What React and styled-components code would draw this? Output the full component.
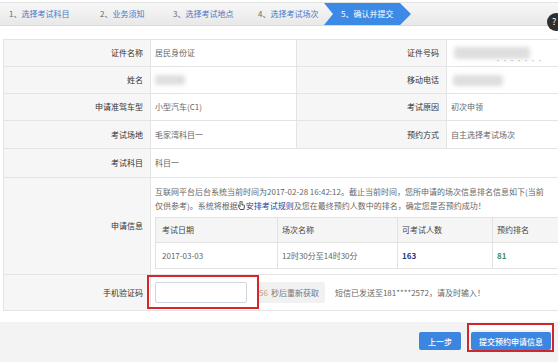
import React from "react";
import styled, { createGlobalStyle } from "styled-components";

const Global = createGlobalStyle`
  html, body { margin: 0; padding: 0; background: #fff; overflow: hidden; }
  body { font-family: "Noto Sans CJK SC", "Noto Sans", sans-serif; font-size: 8px; color: #555; }
`;

const Page = styled.div`
  position: relative;
  width: 558px;
  height: 362px;
  overflow: hidden;
  background: #fff;
`;

const StepBar = styled.div`
  margin-top: 2px;
  height: 22px;
  display: flex;
  align-items: stretch;
  background: linear-gradient(#f7f7f7, #e8e8e8);
  border-top: 1px solid #e2e2e2;
  border-bottom: 1px solid #dadada;
`;

const Step = styled.div`
  flex: 0 0 ${(p) => p.w}px;
  display: flex;
  align-items: center;
  padding-left: ${(p) => p.pl || 9}px;
  box-sizing: border-box;
  white-space: nowrap;
  color: #4a78c6;
  line-height: 10px;
`;

const StepNum = styled.span`
  color: #6a6a5a;
`;

const ActiveStep = styled(Step)`
  background: #3c89e6;
  color: #fff;
  clip-path: polygon(0 0, calc(100% - 11px) 0, 100% 50%, calc(100% - 11px) 100%, 0 100%, 9px 50%);
`;

const HelpDot = styled.div`
  position: absolute;
  left: 547px;
  top: 13px;
  width: 18px;
  height: 18px;
  border-radius: 50%;
  background: #2e2e2e;
  color: #fff;
  font-size: 9px;
  line-height: 18px;
  text-indent: 5px;
`;

const InfoGrid = styled.div`
  margin: 13px 0 0 3px;
  width: 640px;
  display: grid;
  grid-template-columns: 147px 146px 150px 197px;
  grid-template-rows: 27px 27px 27px 28px 29px 97px 36px;
  border-top: 1px solid #e4e4e4;
  border-left: 1px solid #e4e4e4;
`;

const Cell = styled.div`
  box-sizing: border-box;
  border-right: 1px solid #e4e4e4;
  border-bottom: 1px solid #e4e4e4;
  display: flex;
  align-items: center;
  white-space: nowrap;
  line-height: 12px;
  grid-column: span ${(p) => p.span || 1};
`;

const Label = styled(Cell)`
  justify-content: flex-end;
  padding-right: 7px;
  background: #f6f6f6;
  color: #333;
`;

const Value = styled(Cell)`
  padding-left: 4px;
  color: #666;
  position: relative;
`;

const InfoValue = styled(Value)`
  flex-direction: column;
  align-items: flex-start;
  padding-top: 7px;
`;

const Blur = styled.span`
  display: inline-block;
  width: ${(p) => p.w}px;
  height: ${(p) => p.h || 11}px;
  margin-left: ${(p) => p.ml || 0}px;
  background: #dedede;
  border-radius: 3px;
  filter: blur(2px);
`;

const Dots = styled.span`
  position: absolute;
  left: 48px;
  top: 15px;
  font-size: 6px;
  letter-spacing: 1px;
  color: #b5b5b5;
`;

const Para = styled.div`
  line-height: 14px;
  color: #666;
  white-space: nowrap;
`;

const Link = styled.span`
  color: #25409a;
`;

const Pointer = styled.svg`
  width: 7px;
  height: 9px;
  vertical-align: -1px;
  margin-right: 1px;
`;

const SubTable = styled.div`
  margin-top: 4px;
  display: grid;
  grid-template-columns: 122px 120px 95px 160px;
  grid-template-rows: 25px 26px;
  border-top: 1px solid #e2e2e2;
  border-left: 1px solid #e2e2e2;
`;

const SubCell = styled.div`
  box-sizing: border-box;
  border-right: 1px solid #e2e2e2;
  border-bottom: 1px solid #e2e2e2;
  display: flex;
  align-items: center;
  padding-left: ${(p) => (p.first ? 6 : 4)}px;
  background: ${(p) => (p.head ? "#f5f5f5" : "#fff")};
  color: ${(p) => p.color || (p.head ? "#444" : "#666")};
  font-weight: ${(p) => (p.bold ? 700 : 400)};
`;

const CodeWrap = styled.div`
  position: relative;
  display: flex;
  align-items: center;
`;

const CodeInput = styled.input`
  box-sizing: border-box;
  width: 92px;
  height: 21px;
  border: 1px solid #cfd6de;
  border-radius: 2px;
  background: #fff;
  outline: none;
  padding: 0 4px;
  font-size: 8px;
`;

const RedFrame = styled.div`
  position: absolute;
  left: -8px;
  top: -7px;
  right: -12px;
  bottom: -6px;
  border: 2px solid #d6262c;
  pointer-events: none;
`;

const CountBtn = styled.span`
  margin-left: 10px;
  height: 21px;
  display: flex;
  align-items: center;
  padding: 0 6px 0 2px;
  background: #f1f1f1;
  color: #777;
  border-radius: 2px;
`;

const Sec = styled.span`
  color: #c9a070;
  margin-right: 3px;
`;

const SmsNote = styled.span`
  margin-left: 10px;
  color: #666;
`;

const Footer = styled.div`
  margin-top: 11px;
  height: 40px;
  background: #f3f3f3;
  display: flex;
  justify-content: flex-end;
  align-items: flex-start;
  gap: 10px;
  padding: 10px 7px 0 0;
  box-sizing: border-box;
`;

const BlueBtn = styled.div`
  height: 18px;
  padding: 0 ${(p) => p.px}px;
  background: #3c86e0;
  color: #fff;
  display: flex;
  align-items: center;
  border-radius: 2px;
  white-space: nowrap;
  font-weight: 500;
`;

const SubmitWrap = styled.div`
  position: relative;
`;

const SubmitFrame = styled.div`
  position: absolute;
  left: -4px;
  top: -9px;
  right: -3px;
  bottom: -2px;
  border: 2px solid #d0272d;
  background: linear-gradient(#fff 0 5px, transparent 5px);
  z-index: 0;
`;

const SubmitBtn = styled(BlueBtn)`
  position: relative;
  z-index: 1;
`;

export default function App() {
  return (
    <Page>
      <Global />
      <StepBar>
        <Step w={91}><StepNum>1、</StepNum>选择考试科目</Step>
        <Step w={73}><StepNum>2、</StepNum>业务须知</Step>
        <Step w={85}><StepNum>3、</StepNum>选择考试地点</Step>
        <Step w={75}><StepNum>4、</StepNum>选择考试场次</Step>
        <ActiveStep w={87} pl={17}>5、确认并提交</ActiveStep>
      </StepBar>
      <HelpDot>?</HelpDot>

      <InfoGrid>
        <Label>证件名称</Label>
        <Value>居民身份证</Value>
        <Label>证件号码</Label>
        <Value>
          <Blur w={76} h={12} ml={3} />
          <Dots>·······</Dots>
        </Value>

        <Label>姓名</Label>
        <Value><Blur w={30} h={10} /></Value>
        <Label>移动电话</Label>
        <Value><Blur w={50} h={11} ml={2} /></Value>

        <Label>申请准驾车型</Label>
        <Value>小型汽车(C1)</Value>
        <Label>考试原因</Label>
        <Value>初次申领</Value>

        <Label>考试场地</Label>
        <Value>毛家湾科目一</Value>
        <Label>预约方式</Label>
        <Value>自主选择考试场次</Value>

        <Label>考试科目</Label>
        <Value span={3}>科目一</Value>

        <Label>申请信息</Label>
        <InfoValue span={3}>
          <Para>
            互联网平台后台系统当前时间为2017-02-28 16:42:12。截止当前时间，您所申请的场次信息排名信息如下(当前
            <br />
            仅供参考)。系统将根据
            <Pointer viewBox="0 0 7 9">
              <path d="M2 0.5v5l-1.2-1.2c-.5-.5-1.2 0-.8.6L2.2 8.5h3.6L6.5 5c.1-.6-.3-1-.8-1H4V0.5C4 0 3.6-.2 3 0S2 .2 2 .5z" fill="#fff" stroke="#222" strokeWidth="0.8" />
            </Pointer>
            <Link>安排考试规则</Link>及您在最终预约人数中的排名，确定您是否预约成功！
          </Para>
          <SubTable>
            <SubCell head first>考试日期</SubCell>
            <SubCell head>场次名称</SubCell>
            <SubCell head>可考试人数</SubCell>
            <SubCell head>预约排名</SubCell>
            <SubCell first>2017-03-03</SubCell>
            <SubCell>12时30分至14时30分</SubCell>
            <SubCell bold color="#1f3a85">163</SubCell>
            <SubCell bold color="#3b8f6c">81</SubCell>
          </SubTable>
        </InfoValue>

        <Label>手机验证码</Label>
        <Value span={3}>
          <CodeWrap>
            <CodeInput type="text" />
            <RedFrame />
          </CodeWrap>
          <CountBtn><Sec>56</Sec>秒后重新获取</CountBtn>
          <SmsNote>短信已发送至181****2572，请及时输入！</SmsNote>
        </Value>
      </InfoGrid>

      <Footer>
        <BlueBtn px={9}>上一步</BlueBtn>
        <SubmitWrap>
          <SubmitFrame />
          <SubmitBtn px={8}>提交预约申请信息</SubmitBtn>
        </SubmitWrap>
      </Footer>
    </Page>
  );
}
